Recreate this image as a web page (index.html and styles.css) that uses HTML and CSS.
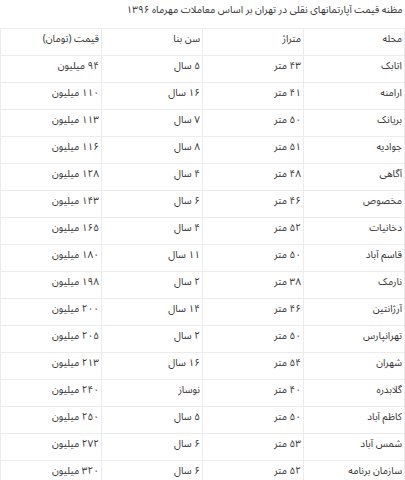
FILE: index.html
```html
<!DOCTYPE html>
<html lang="fa" dir="rtl">
<head>
<meta charset="utf-8">
<link rel="stylesheet" href="styles.css">
</head>
<body>
<table class="prices">
<tr class="title-row"><td colspan="4">مظنه قیمت آپارتمانهای نقلی در تهران بر اساس معاملات مهرماه ۱۳۹۶</td></tr>
<tr><td class="c1">محله</td><td class="c2">متراژ</td><td class="c3">سن بنا</td><td class="c4">قیمت (تومان)</td></tr>
<tr><td>اتابک</td><td>۴۳ متر</td><td>۵ سال</td><td>۹۴ میلیون</td></tr>
<tr><td>ارامنه</td><td>۴۱ متر</td><td>۱۶ سال</td><td>۱۱۰ میلیون</td></tr>
<tr><td>بریانک</td><td>۵۰ متر</td><td>۷ سال</td><td>۱۱۳ میلیون</td></tr>
<tr><td>جوادیه</td><td>۵۱ متر</td><td>۸ سال</td><td>۱۱۶ میلیون</td></tr>
<tr><td>آگاهی</td><td>۴۸ متر</td><td>۴ سال</td><td>۱۲۸ میلیون</td></tr>
<tr><td>مخصوص</td><td>۴۶ متر</td><td>۶ سال</td><td>۱۴۳ میلیون</td></tr>
<tr><td>دخانیات</td><td>۵۲ متر</td><td>۴ سال</td><td>۱۶۵ میلیون</td></tr>
<tr><td>قاسم آباد</td><td>۵۰ متر</td><td>۱۱ سال</td><td>۱۸۰ میلیون</td></tr>
<tr><td>نارمک</td><td>۳۸ متر</td><td>۲ سال</td><td>۱۹۸ میلیون</td></tr>
<tr><td>آرژانتین</td><td>۴۶ متر</td><td>۱۴ سال</td><td>۲۰۰ میلیون</td></tr>
<tr><td>تهرانپارس</td><td>۵۰ متر</td><td>۲ سال</td><td>۲۰۵ میلیون</td></tr>
<tr><td>شهران</td><td>۵۴ متر</td><td>۱۶ سال</td><td>۲۱۳ میلیون</td></tr>
<tr><td>گلابدره</td><td>۴۰ متر</td><td>نوساز</td><td>۲۴۰ میلیون</td></tr>
<tr><td>کاظم آباد</td><td>۵۰ متر</td><td>۵ سال</td><td>۲۵۰ میلیون</td></tr>
<tr><td>شمس آباد</td><td>۵۳ متر</td><td>۶ سال</td><td>۲۷۲ میلیون</td></tr>
<tr class="last"><td>سازمان برنامه</td><td>۵۲ متر</td><td>۶ سال</td><td>۳۲۰ میلیون</td></tr>
</table>
</body>
</html>
```
FILE: styles.css
```css
html, body {
  margin: 0;
  padding: 0;
  background: #fff;
}
body {
  font-family: "Noto Sans Arabic", "Noto Naskh Arabic", "DejaVu Sans", sans-serif;
  font-size: 10px;
  color: #333;
  overflow: hidden;
}
.prices {
  width: 405px;
  border-collapse: collapse;
  table-layout: fixed;
  direction: rtl;
}
.prices td {
  height: 27px;
  box-sizing: border-box;
  padding: 3px 2px 0 2px;
  vertical-align: top;
  text-align: right;
  border: 1px solid #ececec;
  line-height: 14px;
  white-space: nowrap;
}
.prices .title-row td {
  height: 28px;
  padding-top: 3px;
  border-top: none;
  border-left: none;
  border-right: none;
}
.c1 { width: 116px; }
.c2 { width: 92px; }
.c3 { width: 93px; }
.c4 { width: 104px; }
.prices tr.last td {
  border-bottom: 3px solid #dedede;
  height: 21px;
}
```
